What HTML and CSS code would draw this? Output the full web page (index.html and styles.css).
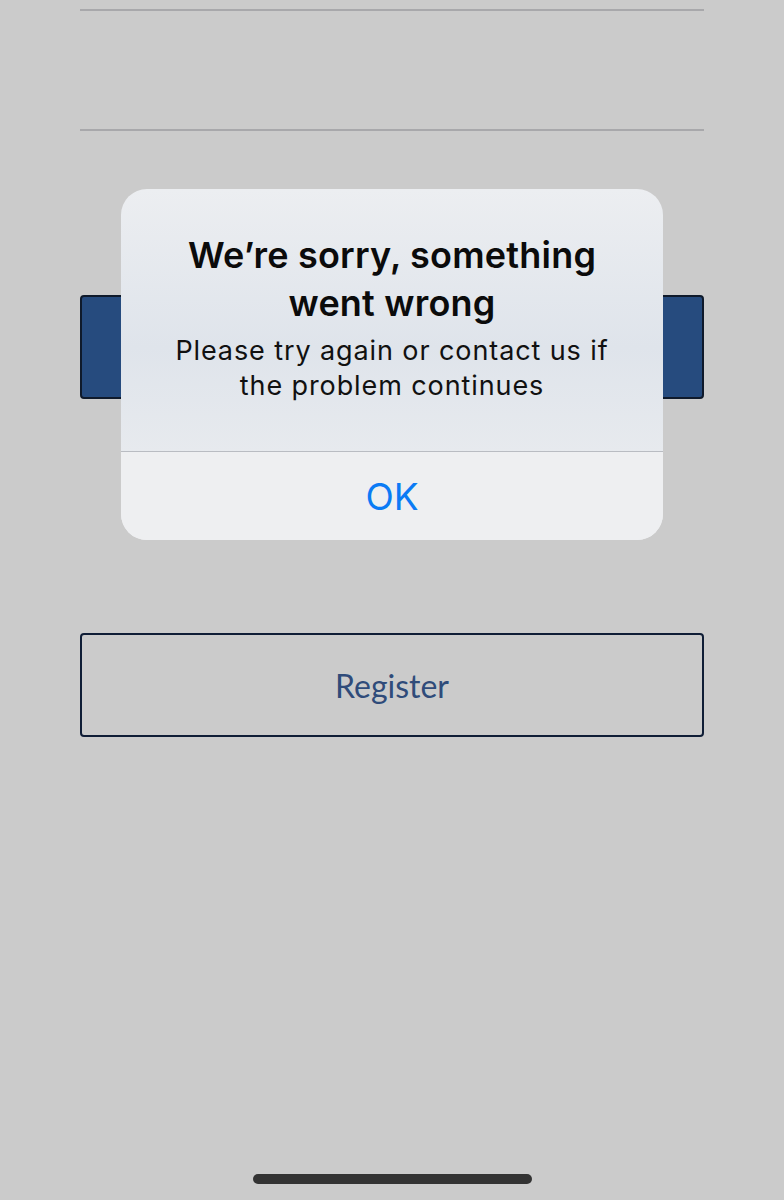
FILE: index.html
```html
<!DOCTYPE html>
<html lang="en">
<head>
  <meta charset="UTF-8">
  <meta name="viewport" content="width=device-width, initial-scale=1.0">
  <title>Sign in</title>
  <link rel="stylesheet" href="styles.css">
</head>
<body>
  <div class="screen">
    <div class="form">
      <div class="field field-top"></div>
      <div class="field"></div>
      <button class="button primary"></button>
      <button class="button secondary">Register</button>
    </div>

    <div class="alert">
      <div class="alert-body">
        <h2 class="alert-title">We’re sorry, something went wrong</h2>
        <p class="alert-message">Please try again or contact us if the problem continues</p>
      </div>
      <div class="alert-action">OK</div>
    </div>

    <div class="home-indicator"></div>
  </div>
</body>
</html>
```

FILE: styles.css
```css
body {
  margin: 0;
  background-color: #cbcbcb;
  font-family: Inter, "Noto Sans", sans-serif;
}
.screen {
  position: relative;
  width: 784px;
  height: 1200px;
  overflow: hidden;
}
.form {
  display: flex;
  flex-direction: column;
  padding: 0 80px;
}
.field {
  height: 118px;
  border-bottom: 2px solid #a8a8ab;
}
.field-top {
  height: 9px;
}
.button {
  display: block;
  width: 100%;
  height: 104px;
  border-radius: 4px;
  font-family: Lato, "Open Sans", sans-serif;
  font-size: 32px;
}
.primary {
  margin-top: 164px;
  background-color: #264b7e;
  border: 2px solid #0f1a2b;
}
.secondary {
  margin-top: 234px;
  background-color: transparent;
  border: 2px solid #0f1d36;
  color: #2f4b7a;
}

/* alert dialog on top */
.alert {
  position: absolute;
  left: 121px;
  top: 189px;
  width: 542px;
  height: 351px;
  border-radius: 26px;
  overflow: hidden;
  display: flex;
  flex-direction: column;
  background: linear-gradient(180deg, #eceef1 0%, #dfe4eb 45%, #e7eaee 75%, #efeff1 100%);
}
.alert-body {
  height: 263px;
  padding: 42px 24px 0;
  box-sizing: border-box;
  border-bottom: 1px solid #b9bcc2;
  text-align: center;
}
.alert-title {
  margin: 0;
  font-size: 36px;
  line-height: 48px;
  font-weight: 600;
  color: #0b0b0b;
  letter-spacing: 0.2px;
  padding: 0 40px;
}
.alert-message {
  margin: 6px 0 0;
  padding: 0 20px;
  font-size: 27px;
  line-height: 35px;
  letter-spacing: 0.9px;
  color: #111;
}
.alert-action {
  flex: 1;
  display: flex;
  align-items: center;
  justify-content: center;
  font-size: 37px;
  color: #0b7bf5;
  background-color: #eeeff1;
}

.home-indicator {
  position: absolute;
  left: 253px;
  top: 1174px;
  width: 279px;
  height: 10px;
  border-radius: 5px;
  background-color: #333;
}
```
